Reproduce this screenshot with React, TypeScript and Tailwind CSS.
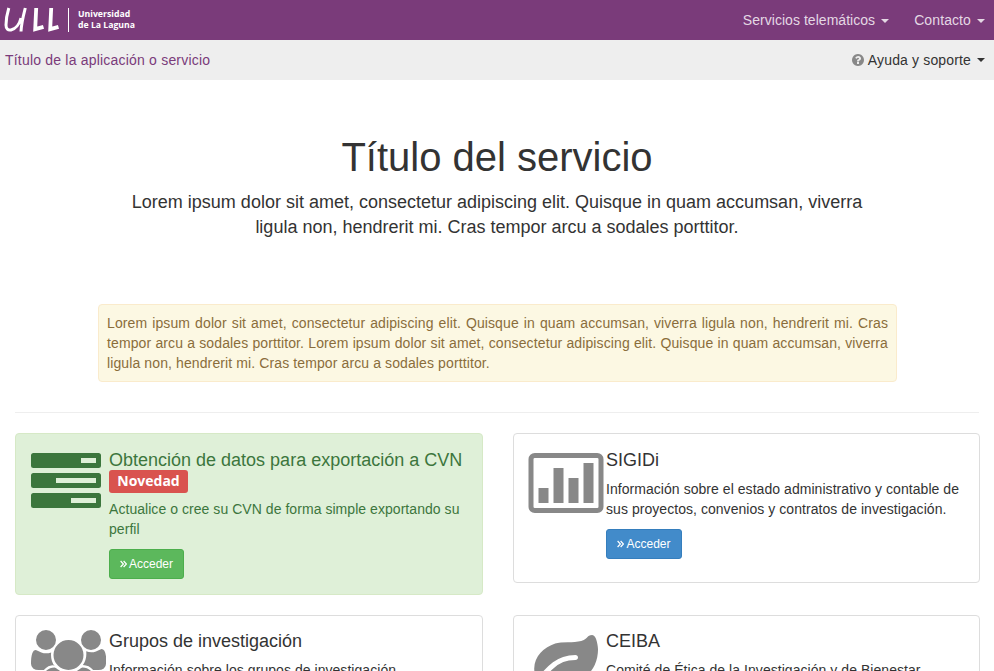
import type { ReactNode } from "react";

const LOREM = "Lorem ipsum dolor sit amet, consectetur adipiscing elit. Quisque in quam accumsan, viverra ligula non, hendrerit mi. Cras tempor arcu a sodales porttitor.";
const NOTICE = `${LOREM} ${LOREM}`;

function Caret() {
  return <span className="ml-1.5 inline-block border-x-4 border-t-4 border-x-transparent border-t-current align-middle" />;
}

function Logo() {
  return (
    <a className="flex items-center text-white">
      <svg width="72" height="40" viewBox="0 0 72 40" fill="none" stroke="white">
        <path d="M8.8 8 C7 14 6 20 6 25 C6 29 8 30.5 11 30 C15.5 29 19.5 24 21 18 M25.3 8 C23.5 15 21.5 22 21 31.5" strokeWidth="3" />
        <path d="M36.2 8 L35.2 29.2 L43.5 26.8" strokeWidth="3.8" />
        <path d="M51.2 8 L50.2 29.2 L58.5 26.8" strokeWidth="3.8" />
        <path d="M68.5 8V32" strokeWidth="1" />
      </svg>
      <span className="ml-1.5 flex flex-col font-['Open_Sans',sans-serif] text-[8.7px] leading-[11px] font-bold">
        <span>Universidad</span>
        <span>de La Laguna</span>
      </span>
    </a>
  );
}

function TasksIcon() {
  return (
    <svg width="70" height="70" viewBox="0 0 70 70" fill="currentColor" className="block">
      <path fillRule="evenodd" d="M2.5 5h65a2.5 2.5 0 0 1 2.5 2.5v10a2.5 2.5 0 0 1-2.5 2.5h-65a2.5 2.5 0 0 1-2.5-2.5v-10a2.5 2.5 0 0 1 2.5-2.5zM50 10v5h15v-5zM2.5 25h65a2.5 2.5 0 0 1 2.5 2.5v10a2.5 2.5 0 0 1-2.5 2.5h-65a2.5 2.5 0 0 1-2.5-2.5v-10a2.5 2.5 0 0 1 2.5-2.5zM25 30v5h40v-5zM2.5 45h65a2.5 2.5 0 0 1 2.5 2.5v10a2.5 2.5 0 0 1-2.5 2.5h-65a2.5 2.5 0 0 1-2.5-2.5v-10a2.5 2.5 0 0 1 2.5-2.5zM40 50v5h25v-5z" />
    </svg>
  );
}

function ChartIcon() {
  return (
    <svg width="76" height="70" viewBox="0 0 76 70" fill="currentColor" className="block">
      <g transform="translate(.5 0)">
        <rect x="2.5" y="7.5" width="70" height="55" rx="3.75" fill="none" stroke="currentColor" strokeWidth="5" />
        <path d="M10 40h10v15H10zM25 20h10v35H25zM40 30h10v25H40zM55 15h10v40H55z" />
      </g>
    </svg>
  );
}

function UsersIcon() {
  return (
    <svg width="75" height="70" viewBox="64 0 1920 1792" fill="currentColor" className="block">
      <path transform="translate(64 0)" d="M593 896q-162 5-265 128h-134q-82 0-138-40.5t-56-118.5q0-353 124-353 6 0 43.5 21t97.5 42.5 119 21.5q67 0 133-23-5 37-5 66 0 159 90 283zm1071 637q0 120-73 189.5t-194 69.5h-874q-121 0-194-69.5t-73-189.5q0-53 3.5-103.5t14-109 26.5-108.5 43-97.5 62-81 85.5-53.5 111.5-20q10 0 43 21.5t73 48 107 48 135 21.5 135-21.5 107-48 73-48 43-21.5q61 0 111.5 20t85.5 53.5 62 81 43 97.5 26.5 108.5 14 109 3.5 103.5zm-1024-1277q0 106-75 181t-181 75-181-75-75-181 75-181 181-75 181 75 75 181zm704 384q0 159-112.5 271.5t-271.5 112.5-271.5-112.5-112.5-271.5 112.5-271.5 271.5-112.5 271.5 112.5 112.5 271.5zm576 225q0 78-56 118.5t-138 40.5h-134q-103-123-265-128 90-124 90-283 0-29-5-66 66 23 133 23 59 0 119-21.5t97.5-42.5 43.5-21q124 0 124 353zm-128-609q0 106-75 181t-181 75-181-75-75-181 75-181 181-75 181 75 75 181z" />
    </svg>
  );
}

function LeafIcon() {
  return (
    <svg width="70" height="70" viewBox="0 0 1792 1792" fill="currentColor" className="block">
      <path d="M1280 704q0-26-19-45t-45-19q-172 0-318 49.5t-259.5 134-235.5 219.5q-19 21-19 45 0 26 19 45t45 19q24 0 45-19 27-24 74-71t67-66q137-124 268.5-176t313.5-52q26 0 45-19t19-45zm512-198q0 95-20 193-46 224-184.5 383t-357.5 268q-214 108-438 108-148 0-286-47-15-5-88-42t-96-37q-16 0-39.5 32t-45 70-52.5 70-60 32q-43 0-63.5-17.5t-45.5-59.5q-2-4-6-11t-5.5-10-3-9.5-1.5-13.5q0-35 31-73.5t68-65.5 68-56 31-48q0-4-14-38t-16-44q-9-51-9-104 0-115 43.5-220t119-184.5 170.5-139 204-95.5q55-18 145-25.5t179.5-9 178.5-6 163.5-24 113.5-56.5l29.5-29.5 29.5-28 27-20 36.5-16 43.5-4.5q39 0 70.5 46t47.5 112 24 124 8 96z" />
    </svg>
  );
}

function HelpIcon() {
  return (
    <svg width="14" height="14" viewBox="0 0 1792 1792" fill="#888888" className="mr-[3px]">
      <path d="M1024 1376v-192q0-14-9-23t-23-9h-192q-14 0-23 9t-9 23v192q0 14 9 23t23 9h192q14 0 23-9t9-23zm256-672q0-88-55.5-163t-138.5-116-170-41q-243 0-371 213-15 24 8 42l132 100q7 6 19 6 16 0 25-12 53-68 86-92 34-24 86-24 48 0 85.5 26t37.5 59q0 38-20 61t-68 45q-63 28-115.5 86.5t-52.5 125.5v36q0 14 9 23t23 9h192q14 0 23-9t9-23q0-19 21.5-49.5t54.5-49.5q32-18 49-28.5t46-35 44.5-48 28-60.5 12.5-81zm384 192q0 209-103 385.5t-279.5 279.5-385.5 103-385.5-103-279.5-279.5-103-385.5 103-385.5 279.5-279.5 385.5-103 385.5 103 279.5 279.5 103 385.5z" />
    </svg>
  );
}

type ServiceProps = { icon: ReactNode; title: string; text: string; badge?: string; success?: boolean; right?: boolean; first?: boolean };

function Service({ icon, title, text, badge, success, right, first }: ServiceProps) {
  const panel = success ? "border-[#d6e9c6] bg-[#dff0d8] text-[#3c763d]" : "border-[#dddddd] bg-white";
  const button = success ? "border-[#4cae4c] bg-[#5cb85c] w-[75px]" : "border-[#357ebd] bg-[#428bca] w-[76px]";
  return (
    <article className={"flex rounded border py-[15px] pr-[15px] " + panel + (right ? " min-h-[150px] pl-[14px]" : " pl-[15px]")}>
      <div className={"-mt-px w-[78px] shrink-0 " + (success ? "" : "text-[#888888]")}>{icon}</div>
      <div className={"min-w-0 flex-1 " + (first ? "pt-px" : "")}>
        <h2 className="text-lg leading-5">{title}</h2>
        {badge && <span className="mb-[-3px] block h-[23px] w-[79px] rounded-[3px] bg-[#d9534f] text-center font-['Open_Sans',sans-serif] text-sm leading-[22px] font-bold text-white">{badge}</span>}
        <p className="mt-[9px] mb-[10px] leading-5 tracking-[0.05px]">{text}</p>
        <a className={"flex h-[30px] items-center justify-center rounded-[3px] border text-xs text-white " + button}>
          <svg width="7" height="8" viewBox="0 0 7 8" fill="none" stroke="currentColor" strokeWidth="1.2" className="mr-[2px]"><path d="M.6 1l2.8 3-2.8 3M3.6 1l2.8 3-2.8 3" /></svg>
          Acceder
        </a>
      </div>
    </article>
  );
}

export default function App() {
  return (
    <div className="h-[671px] w-[994px] overflow-hidden bg-white font-['Liberation_Sans',Arial,sans-serif] text-sm text-[#333333]">
      <header className="flex h-10 items-center justify-between bg-[#7a3b7a] pr-[9px] text-[#e4d8e4]">
        <Logo />
        <nav className="flex gap-[25px]">
          <a className="tracking-[0.04px]">Servicios telemáticos<Caret /></a>
          <a className="tracking-[0.1px]">Contacto<Caret /></a>
        </nav>
      </header>
      <div className="flex h-10 items-center justify-between bg-[#eeeeee] pr-[9px] pl-[5px]">
        <a className="tracking-[0.2px] text-[#7a3b7a]">Título de la aplicación o servicio</a>
        <a className="flex items-center tracking-[0.15px]"><HelpIcon />Ayuda y soporte<Caret /></a>
      </div>
      <main className="px-[15px]">
        <section className="flex flex-col items-center pt-[54px] text-center">
          <h1 className="text-[40px] leading-[46px]">Título del servicio</h1>
          <p className="mt-[10px] w-[760px] text-lg leading-[25px]">{LOREM}</p>
        </section>
        <div className="mr-[82px] ml-[83px] mt-16 rounded border border-[#faebcc] bg-[#fcf8e3] p-2 text-justify leading-5 tracking-[0.11px] text-[#8a6d3b]">
          {NOTICE}
        </div>
        <hr className="mt-[30px] mb-5 border-[#eeeeee]" />
        <div className="grid grid-cols-[468px_467px] items-start gap-x-[30px] gap-y-5">
          <Service success first icon={<TasksIcon />} title="Obtención de datos para exportación a CVN" badge="Novedad" text="Actualice o cree su CVN de forma simple exportando su perfil" />
          <Service right first icon={<ChartIcon />} title="SIGIDi" text="Información sobre el estado administrativo y contable de sus proyectos, convenios y contratos de investigación." />
          <Service icon={<UsersIcon />} title="Grupos de investigación" text="Información sobre los grupos de investigación." />
          <Service right icon={<LeafIcon />} title="CEIBA" text="Comité de Ética de la Investigación y de Bienestar Animal" />
        </div>
      </main>
    </div>
  );
}
